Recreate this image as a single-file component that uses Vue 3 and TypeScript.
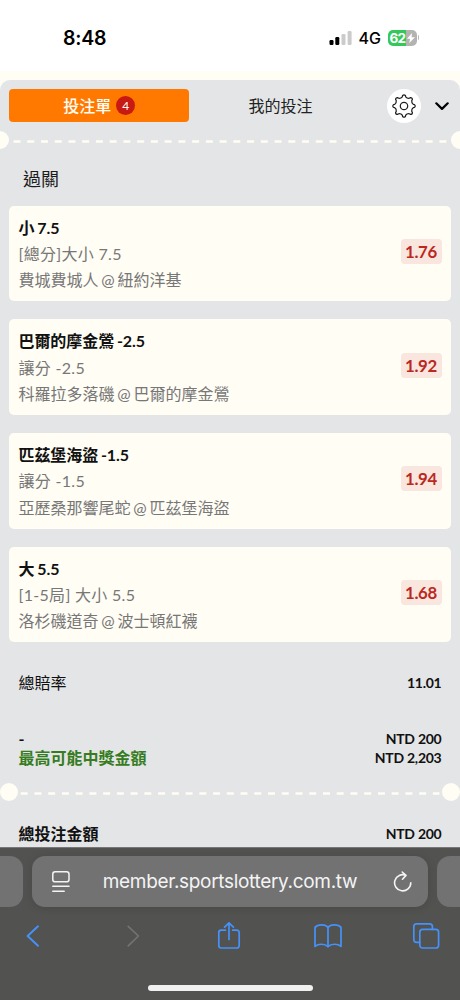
<script setup lang="ts">
interface Bet {
  pick: string
  market: string
  match: string
  odds: string
}

const bets: Bet[] = [
  { pick: '小 7.5', market: '[總分]大小 7.5', match: '費城費城人 @ 紐約洋基', odds: '1.76' },
  { pick: '巴爾的摩金鶯 -2.5', market: '讓分 -2.5', match: '科羅拉多落磯 @ 巴爾的摩金鶯', odds: '1.92' },
  { pick: '匹茲堡海盜 -1.5', market: '讓分 -1.5', match: '亞歷桑那響尾蛇 @ 匹茲堡海盜', odds: '1.94' },
  { pick: '大 5.5', market: '[1-5局] 大小 5.5', match: '洛杉磯道奇 @ 波士頓紅襪', odds: '1.68' },
]

// Outline of an eight-tooth cog centred on the origin
function cogPath(): string {
  const at = (deg: number, r: number): string => {
    const a = ((deg - 90) * Math.PI) / 180
    return `${(r * Math.cos(a)).toFixed(2)} ${(r * Math.sin(a)).toFixed(2)}`
  }
  let d = `M${at(-7.5, 10.6)}`
  for (let i = 0; i < 8; i++) {
    const c = i * 45
    d += `Q${at(c, 11.9)} ${at(c + 7.5, 10.6)}`
    d += `L${at(c + 10.5, 9.4)}`
    d += `Q${at(c + 22.5, 8)} ${at(c + 34.5, 9.4)}`
    d += `L${at(c + 37.5, 10.6)}`
  }
  return d + 'Z'
}
const cog = cogPath()
</script>

<template>
  <div class="phone">
    <header class="status">
      <span class="clock">8:48</span>
      <div class="status-right">
        <svg class="signal" width="23" height="14" viewBox="0 0 23 14">
          <rect x="0.5" y="9" width="4" height="5" rx="1.2" fill="#000" />
          <rect x="6.3" y="6" width="4" height="8" rx="1.2" fill="#000" />
          <rect x="12.5" y="3" width="4" height="11" rx="1.2" fill="#cbcbcb" />
          <rect x="18.6" y="0" width="4" height="14" rx="1.2" fill="#cbcbcb" />
        </svg>
        <span class="network">4G</span>
        <div class="battery">
          <span class="level">62</span>
          <svg width="8" height="10" viewBox="0 0 8 10"><path d="M5 0 0 5.7h3L2.3 10 8 4.2H4.6z" fill="#fff" /></svg>
        </div>
        <i class="battery-cap"></i>
      </div>
    </header>

    <main class="page">
      <section class="slip">
        <nav class="tabs">
          <button class="tab active"><span>投注單</span><b class="count">4</b></button>
          <button class="tab"><span>我的投注</span></button>
          <span class="gear">
            <svg width="28" height="28" viewBox="-14 -14 28 28" fill="none" stroke="#222" stroke-width="1.25" stroke-linejoin="round">
              <path :d="cog" />
              <circle r="3.7" />
            </svg>
          </span>
          <svg class="chevron" width="14" height="9" viewBox="0 0 14 9" fill="none" stroke="#000" stroke-width="2.2" stroke-linecap="round" stroke-linejoin="round"><path d="M1.3 1.3 7 6.9l5.7-5.6" /></svg>
        </nav>

        <div class="perforation top"><i></i><svg height="3" width="434"><line x1="0.5" y1="1.5" x2="434" y2="1.5" /></svg><i></i></div>

        <h2>過關</h2>

        <ul class="bets">
          <li v-for="bet in bets" :key="bet.odds" class="bet">
            <div class="info">
              <strong>{{ bet.pick }}</strong>
              <span class="market">{{ bet.market }}</span>
              <span class="match">{{ bet.match }}</span>
            </div>
            <span class="odds">{{ bet.odds }}</span>
          </li>
        </ul>

        <div class="row total-odds"><span>總賠率</span><b>11.01</b></div>
        <div class="row stake"><b>-</b><b>NTD 200</b></div>
        <div class="row payout"><strong>最高可能中獎金額</strong><b>NTD 2,203</b></div>

        <div class="perforation bottom"><i></i><svg height="3" width="424"><line x1="2.7" y1="1.5" x2="421.5" y2="1.5" /></svg><i></i></div>

        <div class="row total"><strong>總投注金額</strong><b>NTD 200</b></div>
      </section>
    </main>

    <footer class="browser">
      <div class="address-row">
        <div class="peek left"></div>
        <div class="address">
          <svg width="18" height="22" viewBox="0 0 18 22" fill="none" stroke="#f4f4f4" stroke-width="1.5" stroke-linecap="round">
            <rect x="0.8" y="0.8" width="16.2" height="10" rx="2.4" /><path d="M.8 15.2H17M.8 20.2H12.2" />
          </svg>
          <span class="url">member.sportslottery.com.tw</span>
          <svg width="20" height="22" viewBox="0 0 20 22" fill="none" stroke="#f4f4f4" stroke-width="1.6" stroke-linecap="round" stroke-linejoin="round">
            <path d="M17.8 11.8A8.1 8.1 0 1 1 13 4.4M9.2 1l3.8 3.4-3.5 3.8" />
          </svg>
        </div>
        <div class="peek right"></div>
      </div>
      <div class="tools">
        <svg width="28" height="28" viewBox="0 0 28 28"><path d="M18 4.3 7.6 14l10.4 9.8" stroke-width="1.9" /></svg>
        <svg class="off" width="28" height="28" viewBox="0 0 28 28"><path d="M10.2 4.3 20.4 14 10.2 23.8" /></svg>
        <svg width="28" height="28" viewBox="0 0 28 28"><path d="M10.4 8.2H6.2a2.4 2.4 0 0 0-2.4 2.4v13a2.4 2.4 0 0 0 2.4 2.4h15.6a2.4 2.4 0 0 0 2.4-2.4v-13a2.4 2.4 0 0 0-2.4-2.4h-4.2M14 17.5V.9M9.6 5.2 14 .8l4.4 4.4" /></svg>
        <svg width="30" height="28" viewBox="0 0 30 28"><path d="M15 5.6C12.6 2.2 5 2 2 5.4v19c3.4-3 10-2.8 13 .3 3-3.1 9.600-3.300 13-.3v-19C25 2 17.400 2.200 15 5.600v19.100" /></svg>
        <svg width="28" height="28" viewBox="0 0 28 28"><rect x="7.8" y="7.4" width="18.8" height="18.6" rx="2.8" /><path d="M7.8 20.4H4.6a2.8 2.8 0 0 1-2.8-2.8V4.600a2.800 2.800 0 0 1 2.800-2.800h13a2.800 2.800 0 0 1 2.800 2.800v2.800" /></svg>
      </div>
      <div class="home"></div>
    </footer>
  </div>
</template>

<style>
body { margin: 0; background: #fff; }
</style>

<style scoped>
.phone {
  width: 460px;
  height: 1000px;
  display: flex;
  flex-direction: column;
  overflow: hidden;
  box-sizing: border-box;
  background: #fff;
  color: #111;
  font-family: Lato, "Noto Sans CJK TC", sans-serif;
}
.status {
  height: 71px;
  box-sizing: border-box;
  padding: 4px 41px 0 63px;
  display: flex;
  align-items: center;
  justify-content: space-between;
  color: #000;
  font-family: Inter, sans-serif;
}
.clock { font-size: 19.5px; font-weight: 600; letter-spacing: -0.25px; }
.status-right { display: flex; align-items: center; }
.network { margin-left: 7px; width: 22px; font-size: 16px; font-weight: 500; }
.battery {
  margin-left: 7px;
  width: 29px;
  height: 16px;
  border-radius: 5px;
  display: flex;
  align-items: center;
  justify-content: center;
  gap: 1px;
  background: linear-gradient(90deg, #34c759 62%, #b3b3b3 62%);
}
.level { color: #fff; font-size: 13.5px; line-height: 16px; font-weight: 700; letter-spacing: -0.6px; }
.battery-cap { width: 1.5px; height: 5px; margin: 0 0 0 1px; background: #bbb; border-radius: 0 2px 2px 0; }

.page { height: 776px; box-sizing: border-box; padding-top: 9px; background: #fffdf4; }
.slip { height: 767px; overflow: hidden; background: #e4e5e7; border-radius: 10px 10px 0 0; }
.tabs { display: flex; align-items: center; height: 51px; padding: 0 11px 0 9px; }
.tab {
  width: 179.5px;
  height: 32.5px;
  padding: 0;
  border: 0;
  border-radius: 4px;
  display: flex;
  align-items: center;
  justify-content: center;
  background: none;
  color: #222;
  font: 400 16px/24px Lato, "Noto Sans CJK TC", sans-serif;
}
.tab + .tab { width: 184px; }
.tab.active { background: #ff7900; color: #fffdf4; font-weight: 500; padding-left: 1px; }
.count {
  width: 19px;
  height: 19px;
  margin-left: 5px;
  border-radius: 50%;
  background: #c81912;
  font-size: 12px;
  font-weight: 400;
  line-height: 19px;
}
.gear {
  flex: none;
  width: 34px;
  height: 34px;
  margin-left: 14px;
  border-radius: 50%;
  display: grid;
  place-items: center;
  background: #fff;
}
.chevron { flex: none; margin: 1.5px 0 0 14.5px; }

.perforation { display: flex; align-items: center; justify-content: space-between; }
.perforation i { flex: none; width: 18px; height: 18px; border-radius: 50%; background: #fffdf4; }
.perforation line { stroke: #fffdf4; stroke-width: 2.4; stroke-dasharray: 7 6.74; }
.perforation.top { margin: 0 -9px; }
.perforation.top svg, .perforation.bottom svg { flex: none; margin-top: 2px; }

h2 { margin: 16.5px 0 0 23px; height: 40px; font-size: 18px; line-height: 27px; font-weight: 400; color: #1c1c1c; }
.bets { list-style: none; margin: 0; padding: 0 9px; display: flex; flex-direction: column; gap: 18.25px; }
.bet {
  height: 95.5px;
  box-sizing: border-box;
  padding: 0 9.5px 4px 9.5px;
  display: flex;
  align-items: center;
  justify-content: space-between;
  background: #fffdf4;
  border-radius: 5px;
}
.info { display: flex; flex-direction: column; padding-top: 5.5px; font-size: 16px; line-height: 26.2px; white-space: nowrap; color: #777; }
.info strong { color: #111; font-weight: 700; word-spacing: -1px; letter-spacing: -0.07px; }
.market { letter-spacing: 0.3px; }
.match { word-spacing: -1.3px; }
.odds {
  width: 41px;
  height: 25px;
  border-radius: 4px;
  background: #f8e6df;
  color: #bb281e;
  font-size: 16.8px;
  line-height: 25px;
  font-weight: 700;
  letter-spacing: -0.35px;
  text-align: center;
}
.row { display: flex; align-items: center; justify-content: space-between; padding: 0 18.5px; font-size: 16px; line-height: 19px; }
.row b { font-size: 14px; font-weight: 700; letter-spacing: -0.25px; }
.total-odds { margin-top: 30.5px; }
.stake { margin-top: 37px; }
.stake b:first-child { font-size: 16px; }
.payout strong { color: #367c20; }
.bottom { margin-top: 16.3px; }
.total { margin-top: 22.7px; color: #111; }

.browser {
  height: 153px;
  box-sizing: border-box;
  padding-top: 8px;
  border-top: 1px solid #777;
  background: #525251;
  display: flex;
  flex-direction: column;
  align-items: center;
}
.address-row { width: 460px; height: 51px; display: flex; justify-content: space-between; }
.peek { width: 23px; background: #727272; }
.peek.left { border-radius: 0 13px 13px 0; }
.peek.right { border-radius: 13px 0 0 13px; }
.address {
  width: 396px;
  box-sizing: border-box;
  padding: 0 15px 0 20px;
  border-radius: 13px;
  background: #727272;
  box-shadow: 0 1px 10px rgba(0, 0, 0, 0.12);
  display: flex;
  align-items: center;
  justify-content: space-between;
}
.url { margin-left: -3px; color: #f4f4f4; font: 400 19px/24px Inter, sans-serif; letter-spacing: -0.32px; }
.tools { width: 460px; box-sizing: border-box; padding: 0 20px; margin-top: 15px; display: flex; justify-content: space-between; }
.tools svg { fill: none; stroke: #4592f8; stroke-width: 1.7; stroke-linecap: round; stroke-linejoin: round; }
.tools .off { stroke: #737373; }
.home { width: 165px; height: 6px; margin-top: 35px; border-radius: 3px; background: #f0f0f0; }
</style>
